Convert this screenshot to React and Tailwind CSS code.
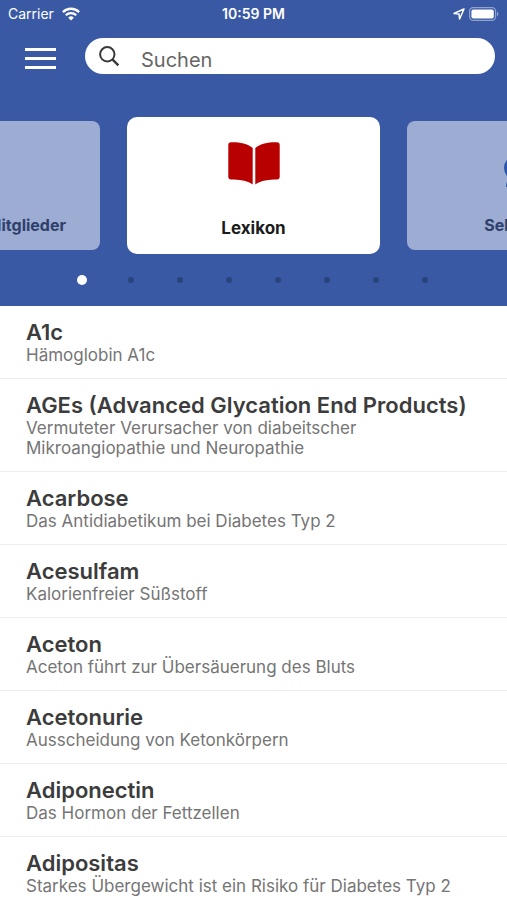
const entries = [
  { title: 'A1c', text: 'Hämoglobin A1c' },
  {
    title: 'AGEs (Advanced Glycation End Products)',
    text: 'Vermuteter Verursacher von diabeitscher Mikroangiopathie und Neuropathie',
  },
  { title: 'Acarbose', text: 'Das Antidiabetikum bei Diabetes Typ 2' },
  { title: 'Acesulfam', text: 'Kalorienfreier Süßstoff' },
  { title: 'Aceton', text: 'Aceton führt zur Übersäuerung des Bluts' },
  { title: 'Acetonurie', text: 'Ausscheidung von Ketonkörpern' },
  { title: 'Adiponectin', text: 'Das Hormon der Fettzellen' },
  { title: 'Adipositas', text: 'Starkes Übergewicht ist ein Risiko für Diabetes Typ 2' },
];

const pages = [0, 1, 2, 3, 4, 5, 6, 7];

function StatusBar() {
  return (
    <div className="grid grid-cols-3 items-center px-2 pt-1 text-sm leading-5 text-white">
      <div className="flex items-center gap-2">
        <span>Carrier</span>
        <svg viewBox="0 0 18 14" className="h-3.5 w-[18px]" fill="none" stroke="currentColor" strokeWidth="2.3">
          <path d="M.9 5.1a11.5 11.5 0 0 1 16.2 0" />
          <path d="M3.8 8.2a7.4 7.4 0 0 1 10.4 0" />
          <path d="M9 13.6 6.2 10.7a4 4 0 0 1 5.6 0z" fill="currentColor" stroke="none" />
        </svg>
      </div>
      <span className="text-center font-semibold">10:59 PM</span>
      <div className="flex items-center justify-end gap-1">
        <svg viewBox="0 0 12 12" className="size-3" fill="none" stroke="currentColor" strokeWidth="1.5" strokeLinejoin="round">
          <path d="M11 1 1 5.4l5 .6.6 5z" />
        </svg>
        <svg viewBox="0 0 30 14" className="h-3.5 w-[30px]">
          <rect x=".6" y=".6" width="26" height="12.8" rx="3.6" fill="none" stroke="#fff" strokeOpacity=".45" strokeWidth="1.2" />
          <rect x="2.4" y="2.4" width="22.4" height="9.2" rx="2" fill="#fff" />
          <path d="M28 4.8c1.8.8 1.8 3.6 0 4.4z" fill="#fff" fillOpacity=".5" />
        </svg>
      </div>
    </div>
  );
}

function SearchBar() {
  return (
    <div className="flex items-center gap-[29px] pt-[14px] pr-3 pl-[25px]">
      <button type="button" aria-label="Menü" className="mt-1 flex w-[31px] flex-col gap-1.5">
        <span className="h-[3px] w-full bg-white" />
        <span className="h-[3px] w-full bg-white" />
        <span className="h-[3px] w-full bg-white" />
      </button>
      <label className="flex h-9 flex-1 items-center gap-[22px] rounded-full bg-white pl-[14px]">
        <svg viewBox="0 0 20 20" className="size-5 shrink-0" fill="none" stroke="#3a3a3a" strokeWidth="2">
          <circle cx="8.3" cy="8.3" r="7.2" />
          <path d="m13.4 13.4 6 6" strokeWidth="2.5" />
        </svg>
        <input
          type="search"
          aria-label="Suchen"
          placeholder="Suchen"
          className="mt-2 min-w-0 flex-1 bg-transparent text-xl leading-7 outline-none placeholder:text-[#666]"
        />
      </label>
    </div>
  );
}

function Carousel() {
  return (
    <div className="flex items-center justify-center gap-[27px] overflow-hidden pt-[43px]">
      <button type="button" className="flex h-[129px] w-[238px] shrink-0 flex-col items-end justify-end rounded-lg bg-[#9cacd2] pr-[34px] pb-3.5">
        <span className="text-base leading-[22px] font-bold text-[#2f3f6b]">Mitglieder</span>
      </button>
      <button type="button" className="flex h-[137px] w-[253px] shrink-0 flex-col items-center justify-between rounded-[10px] bg-white pt-[25px] pb-[15px]">
        <svg viewBox="0 0 52 43" className="h-[43px] w-[52px]" fill="#b90000">
          <path d="M3 .3C11 0 19 1.500 24.700 6v36.500C19 38.300 11 37.800 3 37.600 1.300 37.500.3 36.500.3 35V3C.3 1.400 1.300.3 3 .3z" />
          <path d="M49 .3C41 0 33 1.500 27.300 6v36.500C33 38.300 41 37.800 49 37.600c1.700-.1 2.700-1.100 2.700-2.600V3c0-1.600-1-2.700-2.700-2.700z" />
        </svg>
        <span className="text-[17px] leading-[22px] font-bold text-[#1c1c1c]">Lexikon</span>
      </button>
      <button type="button" className="flex h-[129px] w-[238px] shrink-0 flex-col items-center justify-between rounded-lg bg-[#9cacd2] pt-[34px] pb-3.5">
        <svg viewBox="0 0 46 36" className="h-9 w-[46px]" fill="#2b56ad">
          <circle cx="14" cy="13" r="13" />
          <path d="M3 32c0-7 4-12 11-12s11 5 11 12z" />
        </svg>
        <span className="text-base leading-[22px] font-bold text-[#2f3f6b]">Selbsthilfe</span>
      </button>
    </div>
  );
}

function Dots() {
  return (
    <div className="flex h-[52px] items-center justify-center">
      {pages.map((page) => (
        <button key={page} type="button" aria-label={`Seite ${page + 1}`} className="flex w-[49px] justify-center">
          <span className={page === 0 ? 'size-2.5 rounded-full bg-white' : 'size-1.5 rounded-full bg-[#29447c]'} />
        </button>
      ))}
    </div>
  );
}

export default function App() {
  return (
    <div className="min-h-screen bg-white font-['Inter',sans-serif]">
      <header className="bg-[#3959a5]">
        <StatusBar />
        <SearchBar />
        <Carousel />
        <Dots />
      </header>
      <ul>
        {entries.map((entry) => (
          <li key={entry.title} className="border-b border-[#ededed] px-[26px] py-[13px]">
            <h2 className="text-[22px] leading-[26px] font-semibold text-[#3c3c3c]">{entry.title}</h2>
            <p className="text-[17px] leading-5 text-[#757575]">{entry.text}</p>
          </li>
        ))}
      </ul>
    </div>
  );
}
